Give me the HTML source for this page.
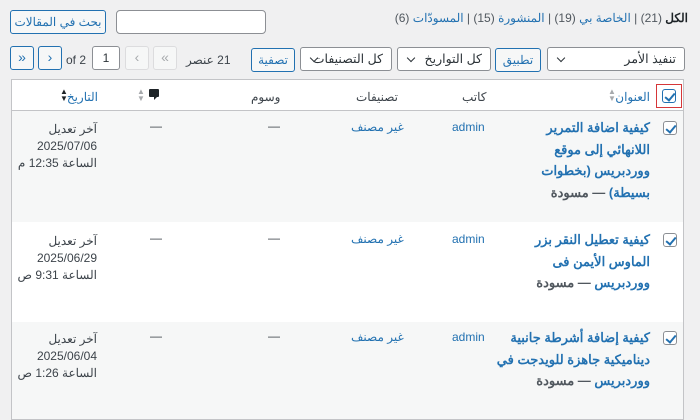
<!DOCTYPE html>
<html><head><meta charset="utf-8"><style>
*{box-sizing:border-box;margin:0;padding:0}
body{width:700px;height:420px;overflow:hidden;background:#f0f0f1;font-family:"Liberation Sans","Noto Sans CJK SC",sans-serif;font-size:12px;color:#3c434a;position:relative}
.a{position:absolute;white-space:nowrap}
.btn{position:absolute;height:24px;border:1px solid #2271b1;border-radius:3px;color:#2271b1;background:#f6f7f7;font-size:12px;text-align:center;line-height:22px}
.sel{position:absolute;height:24px;border:1px solid #8c8f94;border-radius:3px;background:#fff;font-size:12.5px;color:#2c3338;line-height:22px;direction:rtl;padding-right:8px;overflow:hidden}
.sel:after{content:"";position:absolute;left:10px;top:7px;width:5px;height:5px;border-right:1.5px solid #2c3338;border-bottom:1.5px solid #2c3338;transform:rotate(45deg);background:#fff}
.pg{position:absolute;top:46px;width:24px;height:24px;border:1px solid #2271b1;border-radius:3px;background:#f6f7f7;color:#2271b1;text-align:center;line-height:21px;font-size:14px}
.pg.d{border-color:#dcdcde;color:#a7aaad;background:#f6f7f7}
.blue{color:#2271b1}
.row{position:absolute;left:11px;width:673px}
.cb{position:absolute;width:14px;height:14px;border:1px solid #8c8f94;border-radius:3px;background:#fff}
.cb:after{content:"";position:absolute;left:4px;top:1px;width:4px;height:8px;border-right:2px solid #2271b1;border-bottom:2px solid #2271b1;transform:rotate(40deg)}
.t{position:absolute;right:50px;width:150px;direction:rtl;text-align:right;font-weight:bold;font-size:13px;line-height:21.5px;color:#2271b1;white-space:normal}
.t span{color:#50575e}
.dt{position:absolute;right:603px;direction:rtl;text-align:right;line-height:17px;font-size:12px;white-space:nowrap}
.arr{font-size:8px;color:#a7aaad;line-height:7px}
</style></head><body>
<div class="a" style="right:12px;top:11px;direction:rtl;font-size:12px;color:#50575e"><b style="color:#1d2327">الكل</b> (21) | <span class="blue">الخاصة بي</span> (19) | <span class="blue">المنشورة</span> (15) | <span class="blue">المسودّات</span> (6)</div>
<div class="a" style="left:116px;top:10px;width:150px;height:24px;border:1px solid #8c8f94;border-radius:4px;background:#fff"></div>
<div class="btn" style="left:10px;top:10px;width:96px">بحث في المقالات</div>

<div class="sel" style="left:547px;top:47px;width:138px">تنفيذ الأمر</div>
<div class="btn" style="left:495px;top:48px;width:46px">تطبيق</div>
<div class="sel" style="left:397px;top:47px;width:94px">كل التواريخ</div>
<div class="sel" style="left:300px;top:47px;width:92px">كل التصنيفات</div>
<div class="btn" style="left:251px;top:48px;width:44px">تصفية</div>
<div class="a" style="left:186px;top:53px;direction:rtl">21 عنصر</div>
<div class="pg d" style="left:153px">«</div>
<div class="pg d" style="left:125px">‹</div>
<div class="a" style="left:92px;top:46px;width:28px;height:24px;border:1px solid #8c8f94;border-radius:3px;background:#fff;text-align:center;line-height:22px;color:#2c3338">1</div>
<div class="a" style="left:66px;top:53px">of 2</div>
<div class="pg" style="left:38px">›</div>
<div class="pg" style="left:10px">»</div>

<div class="row" style="top:79px;height:341px;border:1px solid #c3c4c7;background:#fff"></div>
<div class="row" style="top:110px;height:1px;background:#c3c4c7"></div>
<div class="a" style="left:656px;top:84px;width:26px;height:24px;border:1px solid #d63638"></div>
<div class="cb" style="left:662px;top:89px;border-color:#2271b1;border-width:1.5px"></div>
<div class="a blue" style="right:50px;top:90px;direction:rtl">العنوان</div>
<div class="a arr" style="left:608px;top:88px">▲<br>▼</div>
<div class="a" style="left:462px;top:90px">كاتب</div>
<div class="a" style="left:356px;top:90px">تصنيفات</div>
<div class="a" style="left:251px;top:90px">وسوم</div>
<div class="a arr" style="left:137px;top:88px">▲<br>▼</div>
<div class="a" style="left:149px;top:89px;width:10px;height:8px;background:#1d2327;border-radius:1px"></div>
<div class="a" style="left:154px;top:96px;width:0;height:0;border-left:4px solid #1d2327;border-bottom:4px solid transparent"></div>
<div class="a blue" style="right:602px;top:90px;direction:rtl">التاريخ</div>
<div class="a" style="left:60px;top:88px;font-size:8px;line-height:7px;color:#1d2327">▲<br>▼</div>

<div class="row" style="top:111px;height:111px;background:#f6f7f7;left:12px;width:671px"></div>
<div class="row" style="top:322px;height:97px;background:#f6f7f7;left:12px;width:671px"></div>

<div class="cb" style="left:663px;top:121px"></div>
<div class="t" style="top:117px;width:148px">كيفية اضافة التمرير اللانهائي إلى موقع ووردبريس (بخطوات بسيطة) <span>— مسودة</span></div>
<div class="a blue" style="left:452px;top:120px">admin</div>
<div class="a blue" style="left:351px;top:120px">غير مصنف</div>
<div class="a" style="left:268px;top:119px">—</div>
<div class="a" style="left:150px;top:119px">—</div>
<div class="dt" style="top:121px">آخر تعديل<br>2025/07/06<br>الساعة 12:35 م</div>

<div class="cb" style="left:663px;top:233px"></div>
<div class="t" style="top:229px">كيفية تعطيل النقر بزر الماوس الأيمن فى ووردبريس <span>— مسودة</span></div>
<div class="a blue" style="left:452px;top:232px">admin</div>
<div class="a blue" style="left:351px;top:232px">غير مصنف</div>
<div class="a" style="left:268px;top:231px">—</div>
<div class="a" style="left:150px;top:231px">—</div>
<div class="dt" style="top:233px">آخر تعديل<br>2025/06/29<br>الساعة 9:31 ص</div>

<div class="cb" style="left:663px;top:331px"></div>
<div class="t" style="top:327px;width:160px">كيفية إضافة أشرطة جانبية ديناميكية جاهزة للويدجت في ووردبريس <span>— مسودة</span></div>
<div class="a blue" style="left:452px;top:330px">admin</div>
<div class="a blue" style="left:351px;top:330px">غير مصنف</div>
<div class="a" style="left:268px;top:329px">—</div>
<div class="a" style="left:150px;top:329px">—</div>
<div class="dt" style="top:331px">آخر تعديل<br>2025/06/04<br>الساعة 1:26 ص</div>
</body></html>
